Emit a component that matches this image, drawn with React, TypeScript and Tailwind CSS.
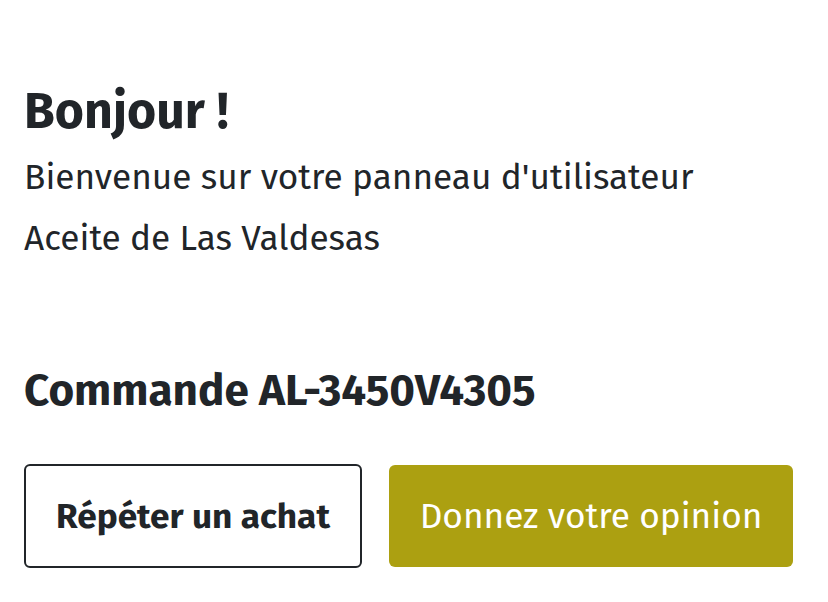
export default function App() {
  return (
    <div
      className="min-h-screen bg-white px-6 pt-[83px] text-[#212529]"
      style={{ fontFamily: '"Fira Sans", "Open Sans", sans-serif' }}
    >
      {/* Greeting */}
      <h1 className="text-[50px] font-bold leading-[56px]">Bonjour !</h1>
      <div className="mt-2 text-[35.2px] leading-[61px]">
        <p>Bienvenue sur votre panneau d'utilisateur</p>
        <p>Aceite de Las Valdesas</p>
      </div>

      {/* Order */}
      <h2 className="mt-[96px] text-[44px] font-bold leading-[52px]">Commande AL-3450V4305</h2>

      <div className="mt-[47px] flex items-center gap-[27px]">
        <button className="flex h-[104px] w-[338px] items-center justify-center rounded-md border-2 border-[#212529] bg-white text-[35.2px] font-bold text-[#212529]">
          Répéter un achat
        </button>
        <button className="flex h-[102px] w-[404px] items-center justify-center rounded-md bg-[#aca011] text-[35.2px] text-white">
          Donnez votre opinion
        </button>
      </div>
    </div>
  )
}
